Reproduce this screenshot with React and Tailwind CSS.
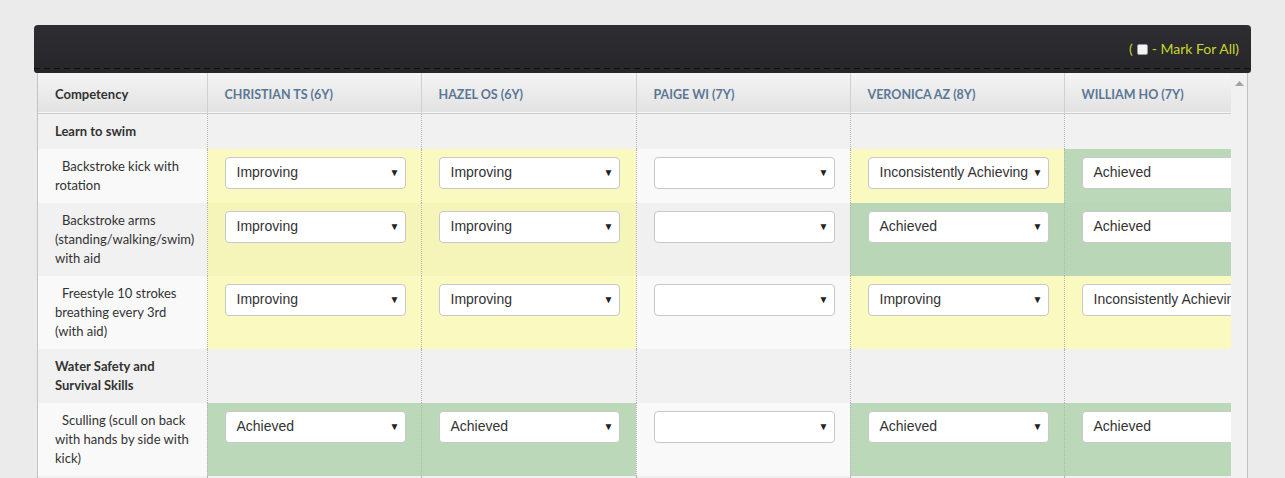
import React from 'react';

const Y1 = 'bg-[#fafac0]';
const Y2 = 'bg-[#f5f5b9]';
const G1 = 'bg-[#bbd9b9]';
const G2 = 'bg-[#b9d6b6]';

const students = ['CHRISTIAN TS (6Y)', 'HAZEL OS (6Y)', 'PAIGE WI (7Y)', 'VERONICA AZ (8Y)', 'WILLIAM HO (7Y)'];

const rows = [
  { type: 'section', title: 'Learn to swim' },
  {
    type: 'item',
    title: 'Backstroke kick with rotation',
    stripe: 'odd',
    cells: ['Improving', 'Improving', '', 'Inconsistently Achieving', 'Achieved'],
  },
  {
    type: 'item',
    title: 'Backstroke arms (standing/walking/swim) with aid',
    stripe: 'even',
    cells: ['Improving', 'Improving', '', 'Achieved', 'Achieved'],
  },
  {
    type: 'item',
    title: 'Freestyle 10 strokes breathing every 3rd (with aid)',
    stripe: 'odd',
    cells: ['Improving', 'Improving', '', 'Improving', 'Inconsistently Achieving'],
  },
  { type: 'section', title: 'Water Safety and Survival Skills' },
  {
    type: 'item',
    title: 'Sculling (scull on back with hands by side with kick)',
    stripe: 'odd',
    cells: ['Achieved', 'Achieved', '', 'Achieved', 'Achieved'],
  },
  {
    type: 'item',
    title: 'Treading water for 30 seconds',
    stripe: 'even',
    cells: ['', '', '', '', ''],
  },
];

function cellBg(value, stripe) {
  const odd = stripe === 'odd';
  if (value === 'Achieved') return odd ? G1 : G2;
  if (value === 'Improving' || value === 'Inconsistently Achieving') return odd ? Y1 : Y2;
  return odd ? 'bg-[#f9f9f9]' : 'bg-[#f0f0f0]';
}

function FakeSelect({ value }) {
  return (
    <div className="w-[181px] h-[32px] bg-white border border-[#c8c8c8] rounded-[4px] flex items-center justify-between pl-[11px] pr-[5px] font-['Liberation_Sans',Arial,sans-serif] text-[14px] text-[#333]">
      <span className="whitespace-nowrap">{value}</span>
      <span className="text-[10px] text-[#222] shrink-0 pl-1">▼</span>
    </div>
  );
}

export default function App() {
  return (
    <div className="min-h-screen bg-[#ebebeb] pt-[25px] pl-[34px] font-['Lato','Open_Sans',sans-serif]">
      <div className="w-[1217px]">
        {/* Dark panel header */}
        <div className="h-[48px] rounded-t-[4px] rounded-b-[3px] bg-gradient-to-b from-[#2e2e32] to-[#262629] flex flex-col">
          <div className="h-[43px] pt-[15px] pr-[12px] flex justify-end items-start text-[14px] leading-[18px] text-[#c9d52f]">
            <span>(</span>
            <span className="mx-[4px] mt-[4px] w-[11px] h-[11px] bg-[#f3f3f3] border border-[#999] rounded-[2px]" />
            <span>- Mark For All)</span>
          </div>
          <div className="h-px bg-[repeating-linear-gradient(90deg,#0e0e10_0_6px,transparent_6px_10px)]" />
        </div>

        {/* Table panel */}
        <div className="mx-[3px] flex border-x border-[#c2c2c2] bg-[#f0f0f0]">
          <div className="w-[1193px] overflow-hidden">
            <table className="table-fixed border-collapse w-[1240px] text-[13px] leading-[19px] text-[#333]">
              <colgroup>
                <col className="w-[169px]" />
                <col className="w-[214px]" />
                <col className="w-[215px]" />
                <col className="w-[214px]" />
                <col className="w-[214px]" />
                <col className="w-[214px]" />
              </colgroup>
              <thead>
                <tr className="h-[40px] bg-gradient-to-b from-[#f5f5f5] to-[#e2e2e2] border-b border-[#cdcdcd]">
                  <th className="text-left font-bold pl-[17px] pt-[3px] text-[#333] border-r border-[#d0d0d0]">Competency</th>
                  {students.map((s, i) => (
                    <th
                      key={s}
                      className={`text-left font-bold pl-[17px] pt-[3px] text-[12.5px] text-[#5b7796] whitespace-nowrap ${i < 4 ? 'border-r border-[#d0d0d0]' : ''}`}
                    >
                      {s}
                    </th>
                  ))}
                </tr>
              </thead>
              <tbody>
                {rows.map((r, ri) => {
                  if (r.type === 'section') {
                    return (
                      <tr key={ri} className="bg-[#f1f1f1]">
                        <td className="align-top py-[8px] pl-[17px] pr-[17px] font-bold border-r border-dotted border-[#b5b5b5]">
                          {r.title}
                        </td>
                        {students.map((s, i) => (
                          <td key={s} className={i < 4 ? 'border-r border-dotted border-[#b5b5b5]' : ''} />
                        ))}
                      </tr>
                    );
                  }
                  const leftBg = r.stripe === 'odd' ? 'bg-[#f9f9f9]' : 'bg-[#f1f1f1]';
                  return (
                    <tr key={ri}>
                      <td className={`align-top py-[8px] pl-[17px] pr-[14px] indent-[7px] border-r border-dotted border-[#b5b5b5] ${leftBg}`}>
                        {r.title}
                      </td>
                      {r.cells.map((v, i) => (
                        <td
                          key={i}
                          className={`align-top pt-[8px] pl-[17px] ${cellBg(v, r.stripe)} ${i < 4 ? 'border-r border-dotted border-[#b5b5b5]' : ''}`}
                        >
                          <FakeSelect value={v} />
                        </td>
                      ))}
                    </tr>
                  );
                })}
              </tbody>
            </table>
          </div>
          {/* Scrollbar */}
          <div className="w-[16px] bg-[#f1f1f1] flex justify-center pt-[8px]">
            <svg width="9" height="5" viewBox="0 0 9 5">
              <path d="M0 5 L4.5 0 L9 5 Z" fill="#a3a3a3" />
            </svg>
          </div>
        </div>
      </div>
    </div>
  );
}
